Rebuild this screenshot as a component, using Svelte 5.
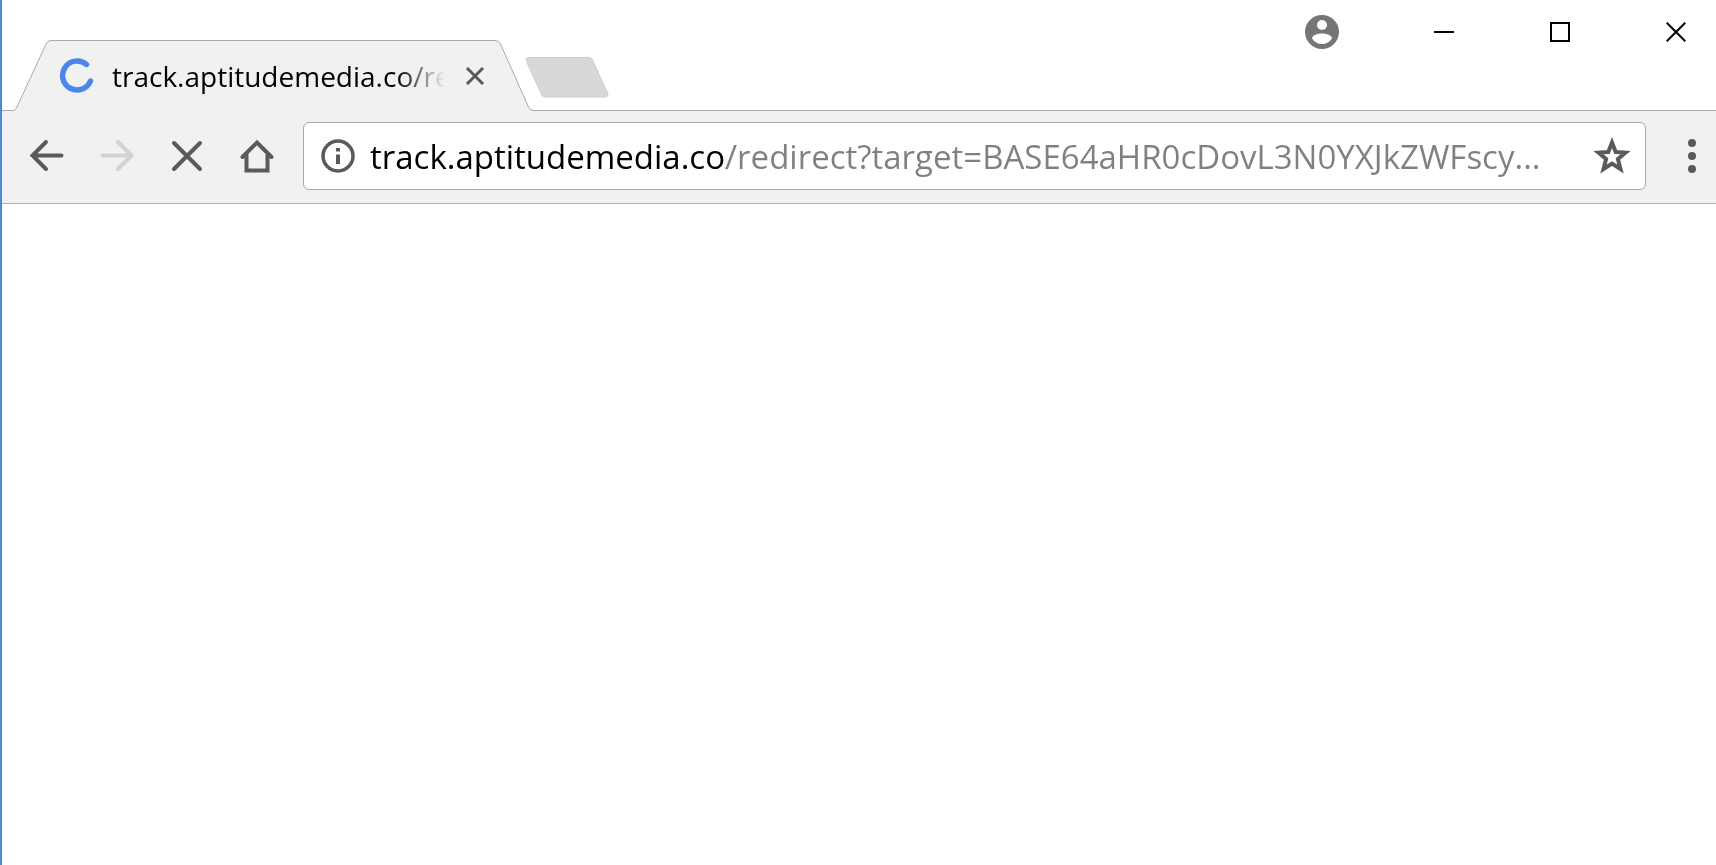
<script lang="ts">
  const host = "track.aptitudemedia.co"

  let address = $state(`${host}/redirect?target=BASE64aHR0cDovL3N0YXJkZWFscy...`)
</script>

<div class="window">
  <header class="titlebar">
    <div class="tabs">
      <div class="tab">
        <svg class="tab-shape" viewBox="0 0 520 72" aria-hidden="true">
          <path
            d="M0 70.5C2 70.5 3 69 4 67L33 4Q34.500 .5 38 .5H482Q486 .5 487.500 4L515 66Q517 70.500 520 70.500V72H0Z"
            fill="#f1f1f1"
          />
          <path
            d="M0 70.5C2 70.5 3 69 4 67L33 4Q34.500 .5 38 .5H482Q486 .5 487.500 4L515 66Q517 70.500 520 70.500"
            fill="none"
            stroke="#a9a9a9"
          />
        </svg>
        <svg class="spinner" width="36" height="36" viewBox="0 0 36 36" aria-hidden="true">
          <path d="M27.500 6.500A14.500 14.500 0 1 0 31.500 23" />
        </svg>
        <span class="title">{host}/redirect</span>
        <button class="tab-close" aria-label="Close tab">
          <svg width="20" height="20" viewBox="0 0 20 20"><path d="M2 2L18 18M18 2L2 18" /></svg>
        </button>
      </div>
      <button class="new-tab" aria-label="New tab">
        <svg width="84" height="41" viewBox="0 0 84 41">
          <path
            d="M4 .5H64Q66.500 .5 67.500 3L82.500 36Q84 40 80 40H20Q17.500 40 16.500 37.500L1.500 4.500Q0 .5 4 .5Z"
            fill="#d8d8d8"
            stroke="#cbcbcb"
          />
        </svg>
      </button>
    </div>

    <div class="controls">
      <button class="account" aria-label="Account">
        <svg width="34" height="34" viewBox="0 0 34 34">
          <circle cx="17" cy="17" r="17" fill="#757575" />
          <circle cx="17" cy="10" r="5" fill="#fff" />
          <path d="M7 23C8 20 12 18.500 17 18.500S26 20 27 23C25 27 21 29 17 29S9 27 7 23Z" fill="#fff" />
        </svg>
      </button>
      <button aria-label="Minimize">
        <svg width="20" height="20" viewBox="0 0 20 20"><path d="M0 10H20" /></svg>
      </button>
      <button aria-label="Maximize">
        <svg width="20" height="20" viewBox="0 0 20 20"><path d="M1 1H19V19H1Z" /></svg>
      </button>
      <button aria-label="Close">
        <svg width="20" height="20" viewBox="0 0 20 20"><path d="M.7 .7L19.300 19.300M19.300 .7L.7 19.300" /></svg>
      </button>
    </div>
  </header>

  <nav class="toolbar" aria-label="Navigation">
    <button class="nav" aria-label="Back">
      <svg width="36" height="36" viewBox="0 0 36 36"><path d="M32.500 17.500H3.500M17 4L3.500 17.500L17 31" /></svg>
    </button>
    <button class="nav" aria-label="Forward" disabled>
      <svg width="36" height="36" viewBox="0 0 36 36"><path d="M3.500 17.500H32.500M19 4L32.500 17.500L19 31" /></svg>
    </button>
    <button class="nav" aria-label="Stop">
      <svg width="36" height="36" viewBox="0 0 36 36"><path d="M5 5L31 31M31 5L5 31" /></svg>
    </button>
    <button class="nav" aria-label="Home">
      <svg width="36" height="36" viewBox="0 0 36 36">
        <path d="M3.500 19L18 4.500L32.500 19M7.500 17V32.500H28.500V17" />
      </svg>
    </button>

    <div class="omnibox">
      <button class="info" aria-label="Site information">
        <svg width="34" height="34" viewBox="0 0 34 34">
          <circle cx="17" cy="17" r="15" fill="none" stroke="#5a5a5a" stroke-width="3.500" />
          <path d="M15 9H19V12.500H15ZM15 15.500H19V25H15Z" fill="#5a5a5a" />
        </svg>
      </button>
      <input type="text" aria-label="Address" spellcheck="false" bind:value={address} />
      <button class="star" aria-label="Bookmark this page">
        <svg width="38" height="38" viewBox="0 0 38 38">
          <path
            d="M19 5.500L22.700 15L32.500 15.600L24.900 22L27.500 32L19 26.600L10.500 32L13.100 22L5.500 15.600L15.300 15Z"
          />
        </svg>
      </button>
    </div>

    <button class="menu" aria-label="Menu">
      <svg width="8" height="34" viewBox="0 0 8 34">
        <circle cx="4" cy="4" r="4" />
        <circle cx="4" cy="17" r="4" />
        <circle cx="4" cy="30" r="4" />
      </svg>
    </button>
  </nav>

  <main></main>
</div>

<style>
  :global(body) {
    margin: 0;
    background: #fff;
  }

  .window {
    display: flex;
    flex-direction: column;
    box-sizing: border-box;
    min-height: 100vh;
    border-left: 2px solid #4a89d4;
    font-family: "Segoe UI", "Open Sans", "Noto Sans", sans-serif;
  }

  button {
    display: flex;
    align-items: center;
    justify-content: center;
    flex-shrink: 0;
    padding: 0;
    border: 0;
    background: none;
  }

  svg {
    display: block;
    flex-shrink: 0;
  }

  .titlebar {
    display: flex;
    justify-content: space-between;
    padding-top: 40px;
    background: #fff;
  }

  .tabs {
    display: flex;
    align-items: flex-start;
    padding-left: 11px;
  }

  .tab {
    position: relative;
    z-index: 1;
    display: flex;
    align-items: center;
    box-sizing: border-box;
    width: 520px;
    height: 72px;
    margin-bottom: -2px;
    padding: 0 48px 0 46px;
  }

  .tab-shape {
    position: absolute;
    inset: 0;
    width: 100%;
    height: 100%;
  }

  .spinner,
  .title,
  .tab-close {
    position: relative;
  }

  .spinner path {
    fill: none;
    stroke: #4b86ec;
    stroke-width: 5.5;
    stroke-linecap: round;
  }

  .title {
    flex: 1;
    min-width: 0;
    margin-left: 17px;
    overflow: hidden;
    font-size: 28px;
    line-height: 40px;
    white-space: nowrap;
    mask-image: linear-gradient(to right, #000 calc(100% - 48px), transparent);
  }

  .tab-close {
    width: 20px;
    height: 40px;
    margin-left: 20px;
  }

  .tab-close path {
    stroke: #5a5a5a;
    stroke-width: 3;
  }

  .new-tab {
    margin-top: 17px;
    margin-left: -8px;
  }

  .controls {
    display: flex;
    gap: 36px;
    height: 64px;
    margin-top: -40px;
  }

  .controls button {
    width: 80px;
  }

  .controls path {
    fill: none;
    stroke: #000;
    stroke-width: 2;
  }

  .controls .account {
    width: 40px;
    margin-right: 26px;
  }

  .controls .account path {
    fill: #fff;
    stroke: none;
  }

  .toolbar {
    display: flex;
    align-items: center;
    padding: 11px 0 13px 10px;
    border-top: 1px solid #a9a9a9;
    border-bottom: 1px solid #b0b0b0;
    background: #f1f1f1;
  }

  .nav {
    width: 70px;
    height: 68px;
  }

  .nav path {
    fill: none;
    stroke: #5a5a5a;
    stroke-width: 4;
    stroke-linecap: round;
  }

  .nav:disabled path {
    stroke: #d2d2d2;
  }

  .omnibox {
    display: flex;
    align-items: center;
    flex: 1;
    box-sizing: border-box;
    min-width: 0;
    height: 68px;
    margin-left: 11px;
    padding: 0 14px 0 17px;
    border: 1px solid #a9a9a9;
    border-radius: 6px;
    background: #fff;
  }

  /* the host is black, the rest of the address grey */
  input {
    flex: 1;
    min-width: 0;
    height: 60px;
    margin-left: 15px;
    padding: 0;
    border: 0;
    outline: 0;
    background: linear-gradient(to right, #000 356px, #808080 356px);
    background-clip: text;
    color: #000;
    font: inherit;
    font-size: 33px;
    -webkit-text-fill-color: transparent;
  }

  .star path {
    fill: none;
    stroke: #5a5a5a;
    stroke-width: 4;
  }

  .menu {
    width: 48px;
    height: 68px;
    margin-left: 22px;
  }

  .menu circle {
    fill: #5a5a5a;
  }

  main {
    flex: 1;
  }
</style>
